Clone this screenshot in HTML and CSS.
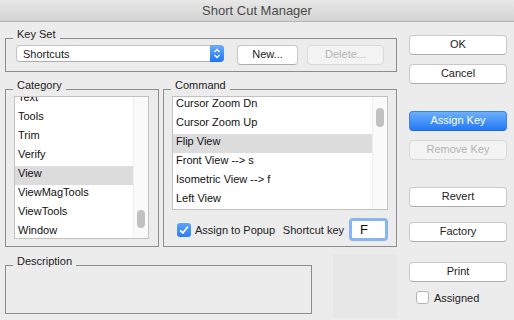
FILE: index.html
```html
<!DOCTYPE html>
<html lang="en">
<head>
    <meta charset="UTF-8">
    <meta name="viewport" content="width=device-width, initial-scale=1.0">
    <title>Short Cut Manager</title>
    <link rel="stylesheet" href="styles.css">
</head>
<body>
<div class="window">
    <div class="titlebar">Short Cut Manager</div>

    <div class="main">
        <div class="left">
            <!-- Key set chooser -->
            <div class="group keyset">
                <span class="group-label">Key Set</span>
                <div class="popup">
                    <span>Shortcuts</span>
                    <span class="stepper">
                        <svg width="14" height="17" viewBox="0 0 14 17">
                            <path d="M4.5 7 L7 4.5 L9.5 7" fill="none" stroke="#fff" stroke-width="1.4"/>
                            <path d="M4.5 10 L7 12.5 L9.5 10" fill="none" stroke="#fff" stroke-width="1.4"/>
                        </svg>
                    </span>
                </div>
                <button class="btn btn-new">New...</button>
                <button class="btn btn-delete" disabled>Delete...</button>
            </div>

            <!-- Category / Command lists -->
            <div class="lists">
                <div class="group category">
                    <span class="group-label">Category</span>
                    <div class="listbox">
                        <div class="items">
                            <div class="row">Text</div>
                            <div class="row">Tools</div>
                            <div class="row">Trim</div>
                            <div class="row">Verify</div>
                            <div class="row selected">View</div>
                            <div class="row">ViewMagTools</div>
                            <div class="row">ViewTools</div>
                            <div class="row">Window</div>
                        </div>
                        <div class="scrollbar"><div class="thumb"></div></div>
                    </div>
                </div>

                <div class="group command">
                    <span class="group-label">Command</span>
                    <div class="listbox">
                        <div class="items">
                            <div class="row">Cursor Zoom Dn</div>
                            <div class="row">Cursor Zoom Up</div>
                            <div class="row selected">Flip View</div>
                            <div class="row">Front View --&gt; s</div>
                            <div class="row">Isometric View --&gt; f</div>
                            <div class="row">Left View</div>
                        </div>
                        <div class="scrollbar"><div class="thumb"></div></div>
                    </div>
                    <div class="assign-row">
                        <span class="checkbox checked">
                            <svg width="14" height="14" viewBox="0 0 14 14">
                                <path d="M3.2 7.4 L5.8 10 L10.8 3.8" fill="none" stroke="#fff" stroke-width="1.8"/>
                            </svg>
                        </span>
                        <span class="check-label">Assign to Popup</span>
                        <span class="shortcut-label">Shortcut key</span>
                        <div class="keyfield">F</div>
                    </div>
                </div>
            </div>

            <div class="bottom-row">
                <div class="group description">
                    <span class="group-label">Description</span>
                </div>
                <div class="preview"></div>
            </div>
        </div>

        <!-- Dialog buttons -->
        <div class="right">
            <button class="btn">OK</button>
            <button class="btn btn-cancel">Cancel</button>
            <button class="btn btn-primary btn-assign">Assign Key</button>
            <button class="btn btn-remove" disabled>Remove Key</button>
            <button class="btn btn-revert">Revert</button>
            <button class="btn btn-factory">Factory</button>
            <button class="btn btn-print">Print</button>
            <div class="assigned">
                <span class="checkbox"></span>
                <span class="check-label">Assigned</span>
            </div>
        </div>
    </div>
</div>
</body>
</html>
```

FILE: styles.css
```css
/* General */
* {
    box-sizing: border-box;
}

body {
    margin: 0;
    background: #ececec;
    font-family: "Liberation Sans", Arial, sans-serif;
    font-size: 11px;
    color: #222;
}

.window {
    width: 514px;
    height: 320px;
    overflow: hidden;
}

.titlebar {
    height: 22px;
    line-height: 21px;
    text-align: center;
    font-size: 13px;
    color: #4a4a4a;
    background: linear-gradient(#e8e8e8, #d3d3d3);
    border-bottom: 1px solid #b5b5b5;
}

.main {
    display: flex;
    padding-left: 5px;
}

.left {
    width: 392px;
}

.right {
    width: 98px;
    margin-left: 12px;
    padding-top: 13px;
    display: flex;
    flex-direction: column;
}

/* Group boxes */
.group {
    position: relative;
    border: 1px solid #8c8c8c;
}

.group-label {
    position: absolute;
    top: -11px;
    left: 7px;
    padding: 0 4px;
    line-height: 13px;
    background: #ececec;
}

.keyset {
    margin-top: 16px;
    height: 34px;
    display: flex;
    align-items: flex-start;
    padding: 6px 0 0 10px;
}

/* Popup button */
.popup {
    width: 208px;
    height: 17px;
    display: flex;
    align-items: center;
    padding-left: 6px;
    background: #fff;
    border: 1px solid #c4c4c4;
    border-bottom-color: #b0b0b0;
    border-radius: 4px;
}

.stepper {
    margin: -1px -1px -1px auto;
    width: 14px;
    height: 17px;
    border-radius: 0 4px 4px 0;
    background: linear-gradient(#6aaefb, #1f74f3);
}

.stepper svg {
    display: block;
}

/* Buttons */
.btn {
    display: block;
    height: 20px;
    padding: 0 0 2px;
    line-height: 16px;
    font-family: inherit;
    font-size: 11px;
    color: #222;
    text-align: center;
    background: #fff;
    border: 1px solid #c8c8c8;
    border-bottom-color: #adadad;
    border-radius: 4px;
}

.btn:disabled {
    color: #b4b4b4;
    background: #f3f3f3;
    border-color: #d9d9d9;
}

.btn-primary {
    color: #fff;
    background: linear-gradient(#6cb0fb, #2378f5);
    border-color: #3b82ec;
    border-bottom-color: #2467d8;
}

.btn-new {
    width: 61px;
    margin-left: 13px;
}

.btn-delete {
    width: 77px;
    margin-left: 9px;
}

.right .btn {
    width: 98px;
}

.btn-cancel { margin-top: 9px; }
.btn-assign { margin-top: 27px; }
.btn-remove { margin-top: 9px; }
.btn-revert { margin-top: 27px; }
.btn-factory { margin-top: 15px; }
.btn-print { margin-top: 20px; }

/* Lists */
.lists {
    display: flex;
    gap: 4px;
    margin-top: 17px;
    height: 158px;
}

.category {
    width: 154px;
    padding: 6px 8px;
}

.command {
    width: 234px;
    padding: 6px 8px 5px;
}

.listbox {
    display: flex;
    background: #fff;
    border: 1px solid #c2c2c2;
    overflow: hidden;
}

.category .listbox {
    width: 135px;
    height: 143px;
}

.command .listbox {
    width: 216px;
    height: 114px;
}

.items {
    flex: 1;
}

.category .items {
    margin-top: -7px;
}

.command .items {
    margin-top: -1px;
}

.row {
    height: 19px;
    line-height: 15px;
    padding-left: 3px;
    white-space: nowrap;
    color: #111;
}

.row.selected {
    background: #dcdcdc;
}

.scrollbar {
    width: 15px;
    background: #fafafa;
    border-left: 1px solid #efefef;
}

.thumb {
    width: 8px;
    margin-left: 3px;
    border-radius: 4px;
    background: #c1c1c1;
}

.category .thumb {
    height: 18px;
    margin-top: 113px;
}

.command .thumb {
    height: 19px;
    margin-top: 11px;
}

/* Assign row */
.assign-row {
    display: flex;
    align-items: center;
    height: 23px;
    margin-top: 8px;
}

.checkbox {
    width: 14px;
    height: 14px;
    border-radius: 3px;
    background: #fff;
    border: 1px solid #b5b5b5;
}

.checkbox.checked {
    border: none;
    background: linear-gradient(#5ea6fa, #2a7cf4);
}

.checkbox svg {
    display: block;
}

.assign-row .checkbox {
    margin-left: 5px;
}

.check-label {
    margin-left: 4px;
}

.shortcut-label {
    margin-left: auto;
    margin-right: 5px;
}

.keyfield {
    width: 39px;
    height: 23px;
    padding-left: 8px;
    line-height: 17px;
    font-size: 13px;
    color: #111;
    background: #fff;
    border: 3px solid #88b5ef;
    border-radius: 4px;
}

/* Bottom */
.bottom-row {
    display: flex;
    margin-top: 7px;
}

.description {
    width: 308px;
    height: 49px;
    margin-top: 11px;
}

.preview {
    width: 64px;
    height: 64px;
    margin-left: 21px;
    background: #e7e7e7;
}

.assigned {
    display: flex;
    align-items: center;
    margin-top: 9px;
    padding-left: 7px;
    height: 13px;
}

.assigned .checkbox {
    width: 13px;
    height: 13px;
}

.assigned .check-label {
    margin-left: 5px;
}
```
